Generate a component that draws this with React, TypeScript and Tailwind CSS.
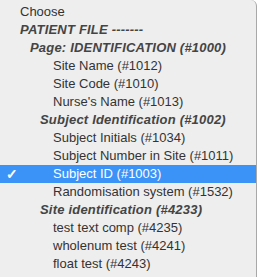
const items: { label: string; kind: string; selected?: boolean }[] = [
  { label: "Choose", kind: "plain" },
  { label: "PATIENT FILE -------", kind: "group" },
  { label: "Page: IDENTIFICATION (#1000)", kind: "sub" },
  { label: "Site Name (#1012)", kind: "item" },
  { label: "Site Code (#1010)", kind: "item" },
  { label: "Nurse's Name (#1013)", kind: "item" },
  { label: "Subject Identification (#1002)", kind: "group2" },
  { label: "Subject Initials (#1034)", kind: "item" },
  { label: "Subject Number in Site (#1011)", kind: "item" },
  { label: "Subject ID (#1003)", kind: "item", selected: true },
  { label: "Randomisation system (#1532)", kind: "item" },
  { label: "Site identification (#4233)", kind: "group2" },
  { label: "test text comp (#4235)", kind: "item" },
  { label: "wholenum test (#4241)", kind: "item" },
  { label: "float test (#4243)", kind: "item" },
];

const padFor = (kind: string) => {
  if (kind === "item") return "pl-[53px]";
  if (kind === "sub") return "pl-[30px] font-bold italic tracking-[0.2px]";
  if (kind === "group2") return "pl-[40px] font-bold italic tracking-[0.2px]";
  if (kind === "group") return "pl-[20px] font-bold italic tracking-[0.2px]";
  return "pl-[20px]";
};

export default function App() {
  return (
    <div className="w-[257px] h-[277px] overflow-hidden bg-[#eeeeee] border-r border-[#a8a8a8] rounded-tr-[6px] pt-[3px] font-['Liberation_Sans',Arial,sans-serif] text-[13px]">
      {items.map((it) => (
        <div
          key={it.label}
          className={`relative h-[18px] leading-[18px] whitespace-nowrap ${padFor(it.kind)} ${
            it.selected ? "bg-[#3b93f7] text-white" : it.kind === "item" || it.kind === "plain" ? "text-[#333333]" : "text-[#444444]"
          }`}
        >
          {it.selected && <span className="absolute left-[6px] top-0 font-bold text-[14px]">✓</span>}
          {it.label}
        </div>
      ))}
    </div>
  );
}
